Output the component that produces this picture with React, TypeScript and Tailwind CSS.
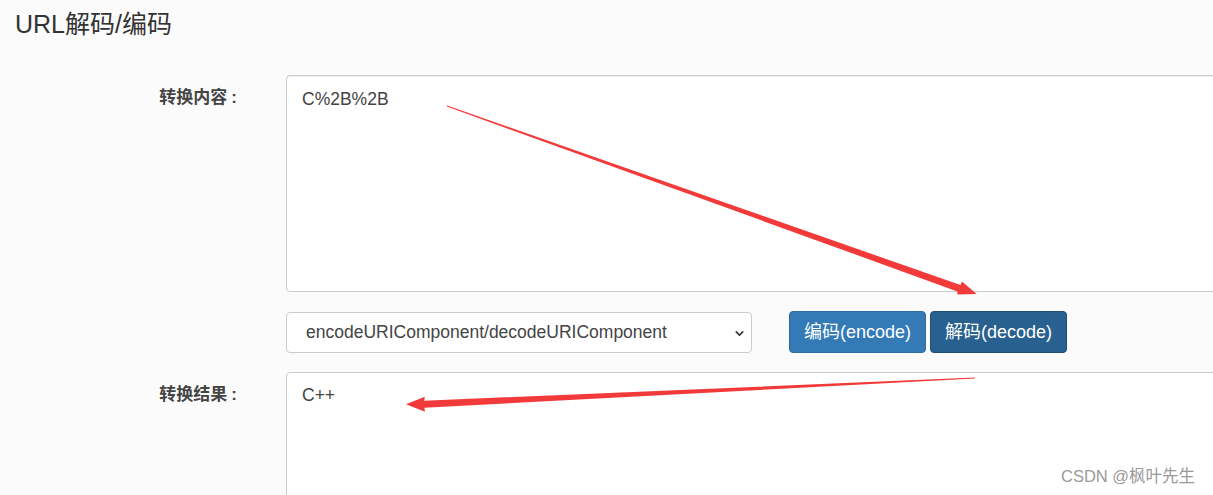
import { ChevronDown } from "lucide-react";

const font = { fontFamily: '"Liberation Sans", Arial, "Noto Sans CJK SC", sans-serif' };

function FieldLabel({ text }: { text: string }) {
  return (
    <label className="w-[240px] shrink-0 pt-[10px] pr-[3px] text-right text-[17px] font-bold text-[#444]">
      {text}
      <span className="ml-[4px]">:</span>
    </label>
  );
}

export default function App() {
  return (
    <div className="relative w-[1213px] h-[495px] overflow-hidden bg-[#fbfbfb] text-[#333]" style={font}>
      {/* Title */}
      <h1 className="pl-[15px] pt-[8px] text-[25px] leading-[32px] font-normal text-[#333]">URL解码/编码</h1>

      <div className="mt-[35px] flex flex-col">
        {/* Input row */}
        <div className="flex">
          <FieldLabel text="转换内容" />
          <div className="ml-[46px] w-[960px] shrink-0 h-[217px] rounded-[4px] border border-[#ccc] bg-white px-[15px] pt-[10px] text-[17.5px] text-[#444] shadow-[inset_0_1px_1px_rgba(0,0,0,0.075)]">
            C%2B%2B
          </div>
        </div>

        {/* Select + buttons */}
        <div className="mt-[19px] flex items-center pl-[286px]">
          <div className="relative flex h-[41px] w-[466px] shrink-0 items-center rounded-[4px] border border-[#ccc] bg-white pl-[19px] text-[17.5px] text-[#444]">
            encodeURIComponent/decodeURIComponent
            <ChevronDown className="absolute right-[5px] top-[14px] h-[13px] w-[13px] text-[#333]" strokeWidth={3} />
          </div>
          <button className="ml-[37px] h-[42px] w-[137px] shrink-0 rounded-[4px] border border-[#2e6da4] bg-[#337ab7] text-[18px] text-white">
            编码(encode)
          </button>
          <button className="ml-[4px] h-[42px] w-[137px] shrink-0 rounded-[4px] border border-[#204d74] bg-[#286090] text-[18px] text-white">
            解码(decode)
          </button>
        </div>

        {/* Output row */}
        <div className="mt-[19px] flex">
          <FieldLabel text="转换结果" />
          <div className="ml-[46px] w-[960px] shrink-0 h-[217px] rounded-[4px] border border-[#ccc] bg-white px-[15px] pt-[9px] text-[17.5px] text-[#444]">
            C++
          </div>
        </div>
      </div>

      {/* Annotation arrows */}
      <svg className="absolute left-0 top-0 pointer-events-none" width="1213" height="495">
        <polygon
          fill="#f33a3a"
          points="446.8,106.5 957.4,291.4 957.4,294.6 976.7,294 962,281.4 960.5,285 447.2,105.5"
        />
        <polygon
          fill="#f33a3a"
          points="975,377.5 424.2,400.7 424.8,396.7 406,404.2 425,411.7 424.4,407.7 975,378.5"
        />
      </svg>

      {/* Watermark */}
      <div className="absolute left-[1061px] top-[464px] text-[16.5px] text-[#999]">CSDN @枫叶先生</div>
    </div>
  );
}
